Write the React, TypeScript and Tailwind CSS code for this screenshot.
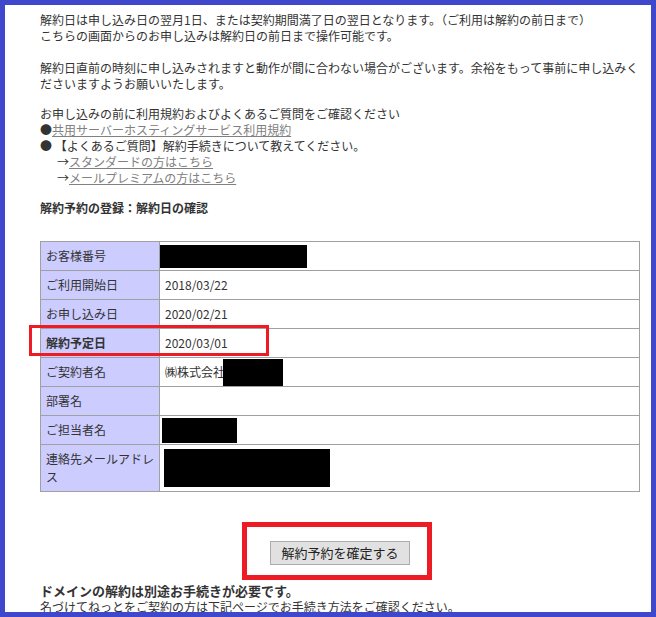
import type { ReactNode } from "react";

const FONT = {
  fontFamily: '"Noto Sans CJK JP", "Noto Sans", sans-serif',
};

type Row = {
  label: string;
  value: ReactNode;
  bold?: boolean;
  tall?: boolean;
};

const Redact = ({ className }: { className: string }) => (
  <span className={`inline-block bg-black ${className}`} />
);

const ROWS: Row[] = [
  {
    label: "お客様番号",
    value: <Redact className="w-[147px] h-[23px] -ml-[5px]" />,
  },
  { label: "ご利用開始日", value: "2018/03/22" },
  { label: "お申し込み日", value: "2020/02/21" },
  { label: "解約予定日", value: "2020/03/01", bold: true },
  {
    label: "ご契約者名",
    value: (
      <span className="flex items-center">
        <span>㈱株式会社</span>
        <Redact className="w-[60px] h-[27px] -ml-[2px]" />
      </span>
    ),
  },
  { label: "部署名", value: "" },
  {
    label: "ご担当者名",
    value: <Redact className="w-[75px] h-[25px] -ml-[3px] self-start" />,
  },
  {
    label: "連絡先メールアドレス",
    value: <Redact className="w-[166px] h-[38px] -ml-[1px]" />,
    tall: true,
  },
];

export default function App() {
  return (
    <div
      style={FONT}
      className="relative w-[656px] h-[617px] overflow-hidden bg-white border-[5px] border-[#3f48cc] text-[12px] leading-[16px] text-[#333]"
    >
      <div className="pl-[35px] pt-[7px] w-[635px]">
        <p>
          解約日は申し込み日の翌月1日、または契約期間満了日の翌日となります。（ご利用は解約の前日まで）
          <br />
          こちらの画面からのお申し込みは解約日の前日まで操作可能です。
        </p>
        <p className="mt-[16px]">
          解約日直前の時刻に申し込みされますと動作が間に合わない場合がございます。余裕をもって事前に申し込みくださいますようお願いいたします。
        </p>
        <div className="mt-[14px]">
          <p>お申し込みの前に利用規約およびよくあるご質問をご確認ください</p>
          <p>
            ●<a className="text-[#808080] underline">共用サーバーホスティングサービス利用規約</a>
          </p>
          <p>● 【よくあるご質問】解約手続きについて教えてください。</p>
          <p className="pl-[17px]">
            →<a className="text-[#808080] underline">スタンダードの方はこちら</a>
          </p>
          <p className="pl-[17px]">
            →<a className="text-[#808080] underline">メールプレミアムの方はこちら</a>
          </p>
        </div>
        <h2 className="mt-[14px] font-bold">解約予約の登録：解約日の確認</h2>

        {/* confirmation table */}
        <div className="mt-[25px] w-[600px] border border-[#a0a0a0]">
          {ROWS.map((r, i) => (
            <div
              key={r.label}
              className={`flex ${
                i < ROWS.length - 1
                  ? "h-[29px] border-b border-[#a0a0a0]"
                  : "h-[46px]"
              }`}
            >
              <div
                className={`w-[119px] shrink-0 bg-[#ccccff] border-r border-[#a0a0a0] pl-[5px] pr-[3px] flex items-center ${
                  r.bold ? "font-bold" : ""
                } ${r.tall ? "leading-[18px]" : ""}`}
              >
                {r.label}
              </div>
              <div className="flex-1 flex items-center pl-[5px] py-[2px]">
                {r.value}
              </div>
            </div>
          ))}
        </div>

        <div className="mt-[49px] flex justify-center w-[600px]">
          <button className="w-[140px] h-[24px] bg-[#e1e1e1] border border-[#adadad] text-[13px] text-[#222]">
            解約予約を確定する
          </button>
        </div>

        <p className="mt-[17px] font-bold text-[13px] leading-[17px]">
          ドメインの解約は別途お手続きが必要です。
        </p>
        <p>名づけてねっとをご契約の方は下記ページでお手続き方法をご確認ください。</p>
      </div>

      {/* red annotation boxes */}
      <div className="absolute left-[24px] top-[320px] w-[240px] h-[31px] border-[3px] border-[#ed1c24]" />
      <div className="absolute left-[237px] top-[517px] w-[190px] h-[58px] border-[5px] border-[#ed1c24]" />
    </div>
  );
}
